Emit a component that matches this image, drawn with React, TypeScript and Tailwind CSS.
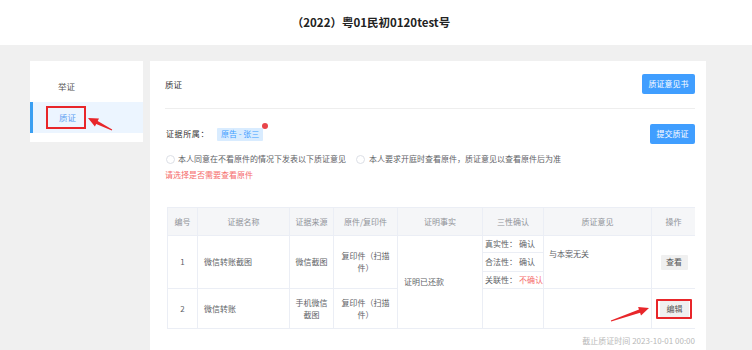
import React from "react";

function arrowPoints(x1: number, y1: number, x2: number, y2: number): string {
  const dx = x2 - x1;
  const dy = y2 - y1;
  const len = Math.hypot(dx, dy);
  const ux = dx / len;
  const uy = dy / len;
  const nx = -uy;
  const ny = ux;
  const L = 10;
  const W = 4.5;
  const S = 1.7;
  const T = 0.5;
  const bx = x2 - ux * L;
  const by = y2 - uy * L;
  const pts: [number, number][] = [
    [x2, y2],
    [bx + nx * W, by + ny * W],
    [bx + nx * S, by + ny * S],
    [x1 + nx * T, y1 + ny * T],
    [x1 - nx * T, y1 - ny * T],
    [bx - nx * S, by - ny * S],
    [bx - nx * W, by - ny * W],
  ];
  return pts.map((p) => `${p[0].toFixed(1)},${p[1].toFixed(1)}`).join(" ");
}

const cell = "bg-white flex items-center";

export default function App() {
  return (
    <div
      className="relative w-[752px] h-[350px] overflow-hidden bg-[#f0f0f0] flex flex-col text-[#606266]"
      style={{ fontFamily: '"Noto Sans CJK SC", "Noto Sans", sans-serif' }}
    >
      {/* Header */}
      <div className="h-[45px] bg-white flex items-center justify-center shrink-0 pr-[10px]">
        <span className="text-[11.5px] font-bold text-[#222]">（2022）粤01民初0120test号</span>
      </div>

      {/* Body */}
      <div className="flex-1 flex pt-[16px] pl-[30px] gap-[7px]">
        {/* Sidebar */}
        <div className="w-[113px] h-[81px] bg-white pt-[10px] self-start flex flex-col">
          <div className="h-[31px] flex items-center pl-[28px] text-[8.5px] text-[#555]">举证</div>
          <div className="relative h-[31px] flex items-center pl-[29px] text-[8.5px] text-[#5a9ef2] bg-[#ecf5ff]">
            <div className="absolute left-0 top-0 bottom-0 w-[3px] bg-[#3a9ff2]" />
            <span className="relative">
              质证
              <span className="absolute left-[-13px] right-[-10px] top-[-5px] bottom-[-5px] border-2 border-[#e8262a]" />
            </span>
          </div>
        </div>

        {/* Main card */}
        <div className="w-[556px] bg-white pl-[15px] pr-[11px] pt-[13px] flex flex-col">
          <div className="h-[20px] flex items-center justify-between">
            <span className="text-[8.5px] text-[#333]">质证</span>
            <button className="h-[20px] w-[53px] bg-[#409eff] text-white text-[8px] rounded-[2px] flex items-center justify-center">
              质证意见书
            </button>
          </div>
          <div className="mt-[14px] h-px bg-[#eeeeee]" />

          <div className="mt-[15px] h-[20px] flex items-center justify-between">
            <div className="flex items-center">
              <span className="text-[8px] text-[#333] ml-px tracking-[0.6px]">证据所属：</span>
              <span className="relative ml-[8px] h-[13px] px-[4px] bg-[#d9ecff] text-[#409eff] text-[8px] flex items-center rounded-[1px]">
                原告 - 张三
                <span className="absolute right-[-5px] top-[-5px] w-[6px] h-[6px] rounded-full bg-[#e8454a]" />
              </span>
            </div>
            <button className="h-[20px] w-[45px] bg-[#409eff] text-white text-[8px] rounded-[2px] flex items-center justify-center">
              提交质证
            </button>
          </div>

          <div className="mt-[9px] h-[12px] flex items-center text-[8px] text-[#606266]">
            <span className="w-[9px] h-[9px] rounded-full border border-[#dcdfe6] bg-white ml-px" />
            <span className="ml-[3px]">本人同意在不看原件的情况下发表以下质证意见</span>
            <span className="ml-[10px] w-[9px] h-[9px] rounded-full border border-[#dcdfe6] bg-white" />
            <span className="ml-[4px]">本人要求开庭时查看原件，质证意见以查看原件后为准</span>
          </div>

          <div className="mt-[4px] h-[12px] flex items-center text-[8px] text-[#f56c6c]">请选择是否需要查看原件</div>

          {/* Table */}
          <div className="mt-[26px] ml-[2px] grid grid-cols-[29px_91px_43px_63px_84px_60px_107px_43px] grid-rows-[27px_52px_39px] gap-px p-px bg-[#ebeef5] text-[8px] leading-[12px]">
            {["编号", "证据名称", "证据来源", "原件/复印件", "证明事实", "三性确认", "质证意见", "操作"].map((h) => (
              <div key={h} className="bg-[#f5f6f8] flex items-center justify-center text-[#909399]">
                {h}
              </div>
            ))}

            {/* Row 1 */}
            <div className={`${cell} justify-center`}>1</div>
            <div className={`${cell} pl-[6px]`}>微信转账截图</div>
            <div className={`${cell} justify-center px-[5px] text-center`}>微信截图</div>
            <div className={`${cell} justify-center px-[6px] text-center`}>复印件（扫描件）</div>
            <div className={`${cell} row-span-2 pl-[6px]`}>证明已还款</div>
            <div className="bg-white flex flex-col">
              <div className="h-[16px] flex items-center pl-[2px]">
                真实性：<span className="ml-[2px]">确认</span>
              </div>
              <div className="h-[19px] flex items-center pl-[2px] border-t border-[#ebeef5]">
                合法性：<span className="ml-[2px]">确认</span>
              </div>
              <div className="flex-1 flex items-center pl-[2px] border-t border-[#ebeef5]">
                关联性：<span className="ml-[2px] text-[#f56c6c]">不确认</span>
              </div>
            </div>
            <div className="bg-white pl-[5px] pt-[12px]">与本案无关</div>
            <div className={`${cell} justify-center`}>
              <span className="w-[27px] h-[15px] bg-[#f0f0f0] text-[#555] flex items-center justify-center rounded-[1px] ml-px">
                查看
              </span>
            </div>

            {/* Row 2 */}
            <div className={`${cell} justify-center`}>2</div>
            <div className={`${cell} pl-[6px]`}>微信转账</div>
            <div className={`${cell} justify-center px-[5px] text-center`}>手机微信截图</div>
            <div className={`${cell} justify-center px-[6px] text-center`}>复印件（扫描件）</div>
            <div className="bg-white" />
            <div className="bg-white" />
            <div className={`${cell} justify-center`}>
              <span className="relative w-[29px] h-[16px] bg-[#f0f0f0] text-[#555] flex items-center justify-center rounded-[1px] ml-[2px]">
                编辑
                <span className="absolute left-[-4px] right-[-3px] top-[-2px] bottom-[-2px] border-2 border-[#e8262a] rounded-[1px]" />
              </span>
            </div>
          </div>

          <div className="mt-[6px] h-[12px] flex items-center justify-end text-[8px] text-[#b8b8b8]">
            截止质证时间 2023-10-01 00:00
          </div>
        </div>
      </div>

      {/* Annotation arrows */}
      <svg className="absolute inset-0 pointer-events-none" width={752} height={350}>
        <polygon points={arrowPoints(112, 130, 88, 118)} fill="#e8262a" />
        <polygon points={arrowPoints(611, 321, 649, 308)} fill="#e8262a" />
      </svg>
    </div>
  );
}
